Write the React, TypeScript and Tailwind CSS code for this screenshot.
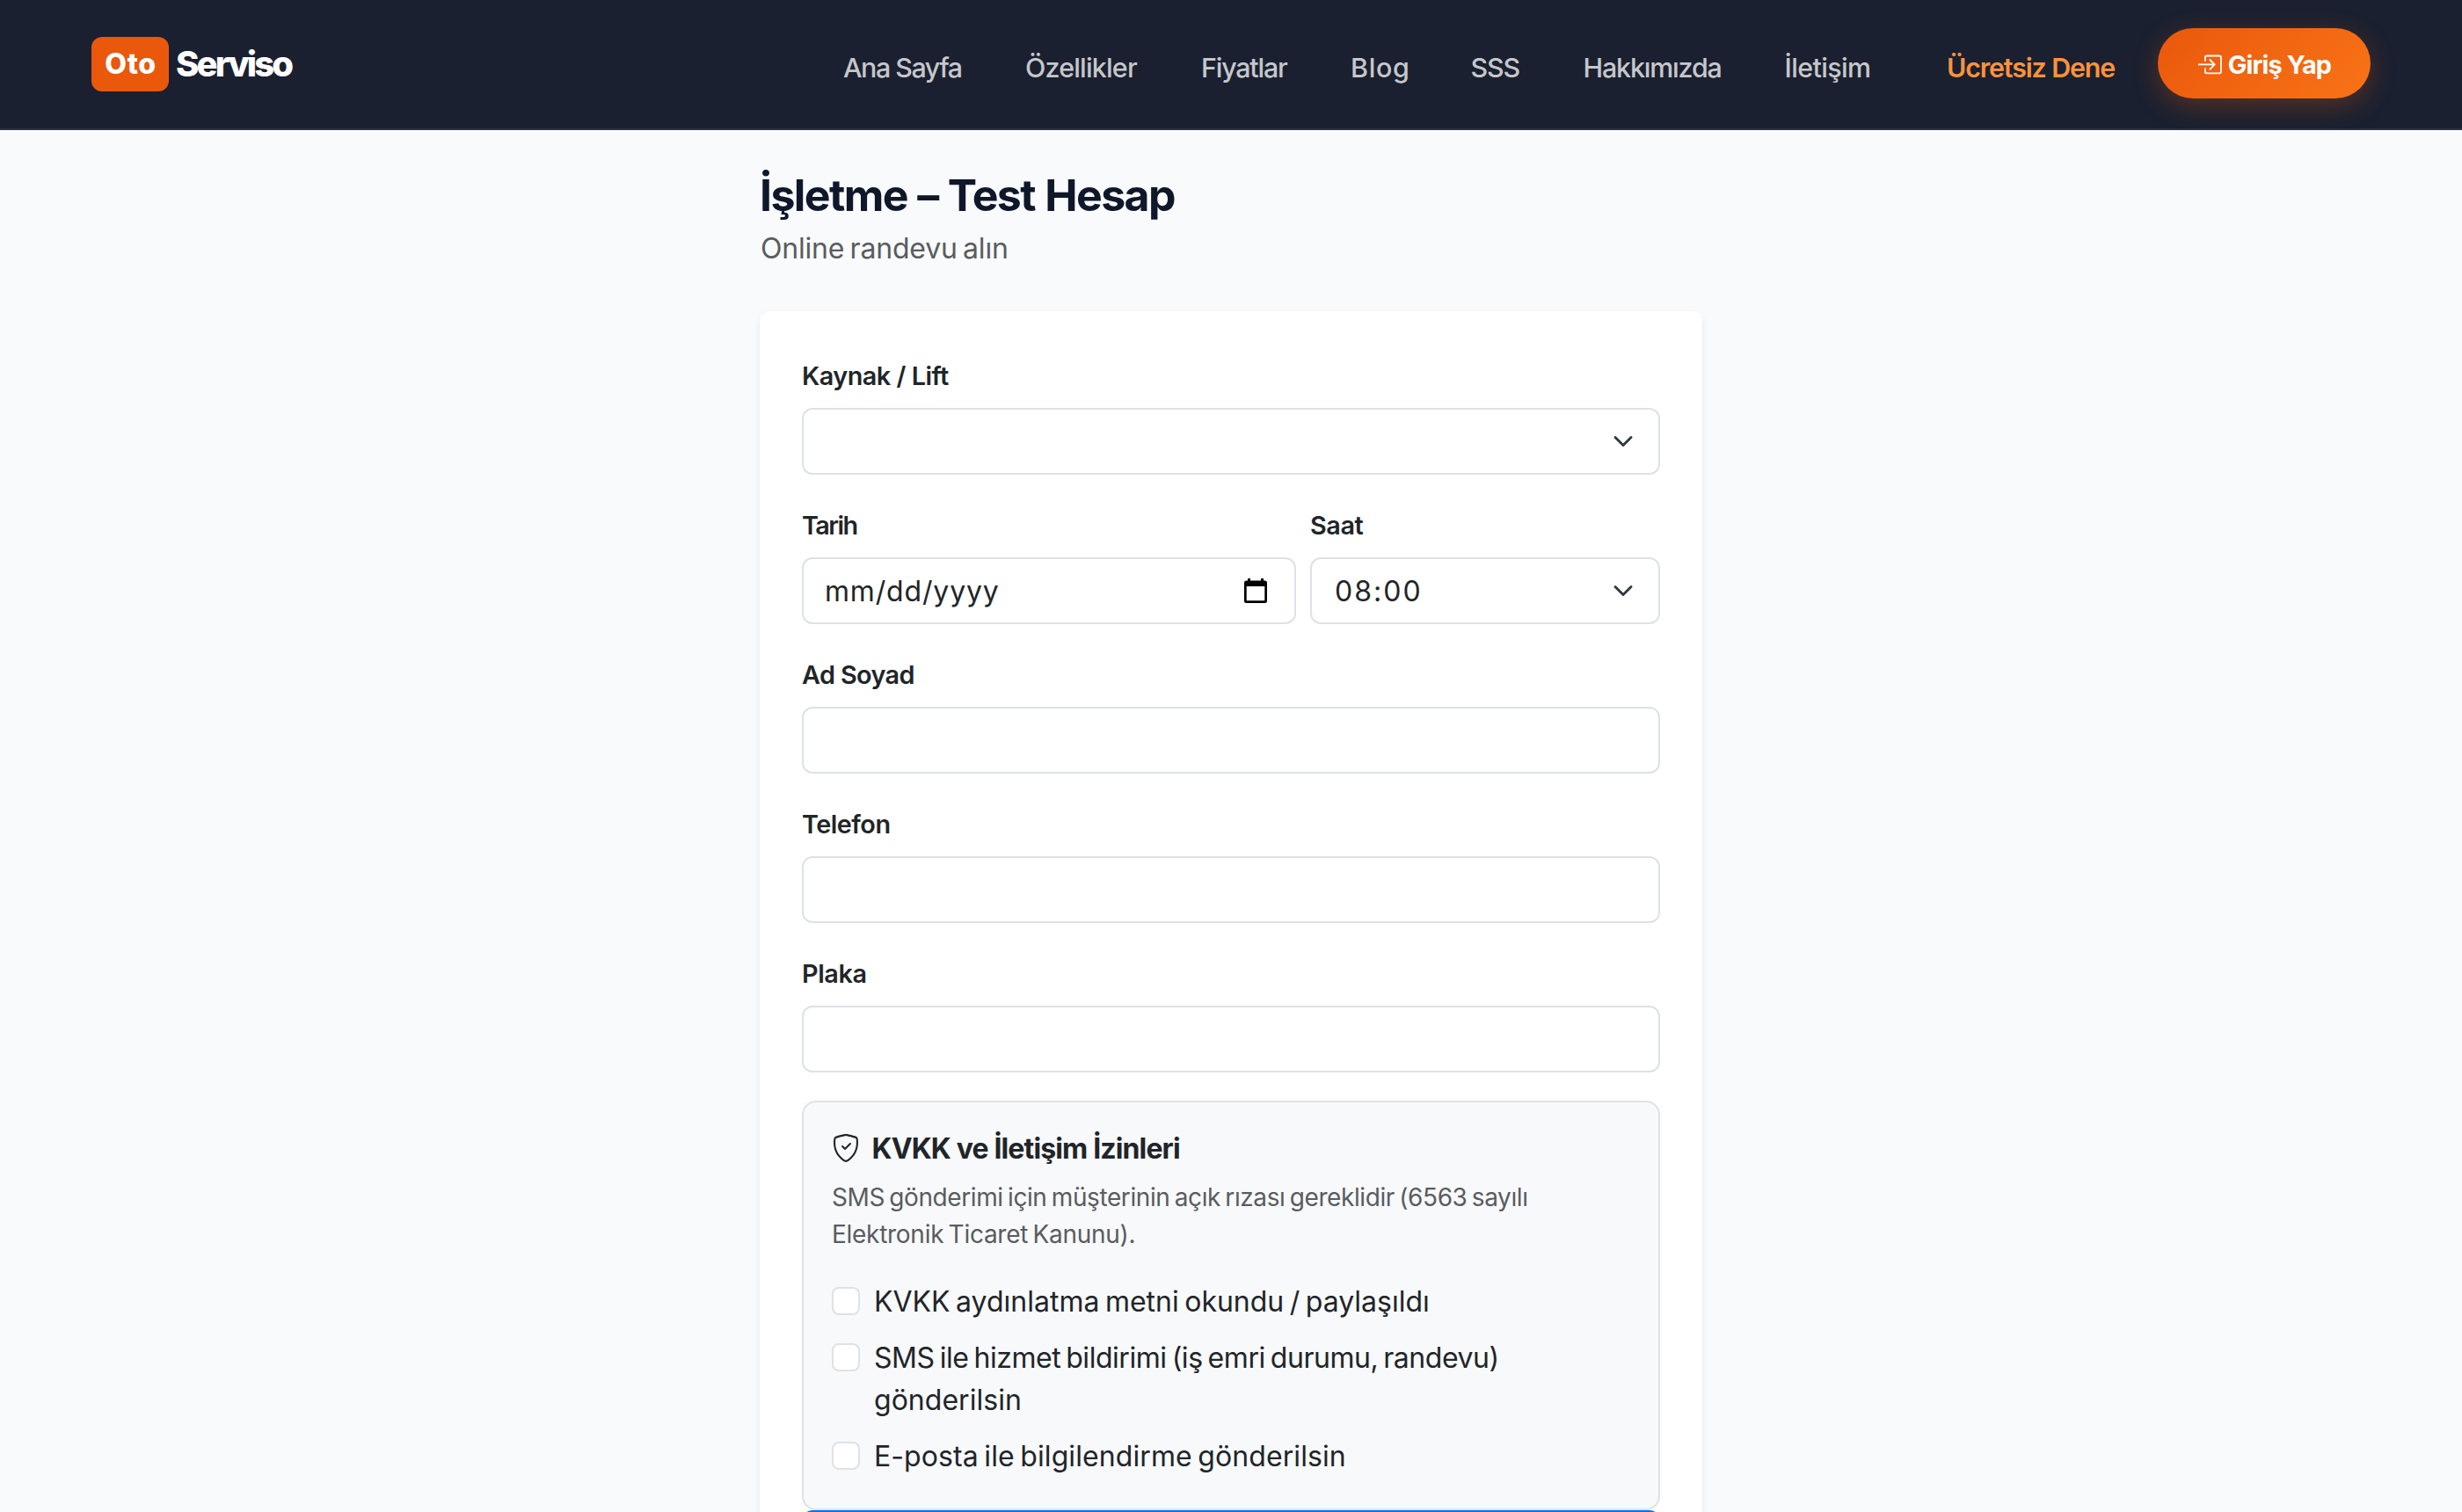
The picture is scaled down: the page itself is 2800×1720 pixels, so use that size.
import React from "react";
import { BsBoxArrowInRight, BsShieldCheck } from "react-icons/bs";

const navItems = [
  { label: "Ana Sayfa", cls: "w-[207px] tracking-[-1.46px]" },
  { label: "Özellikler", cls: "w-[200px] tracking-[-0.8px]" },
  { label: "Fiyatlar", cls: "w-[170px] tracking-[-1.2px]" },
  { label: "Blog", cls: "w-[136.5px] tracking-[0.68px]" },
  { label: "SSS", cls: "w-[128px] tracking-[-1.08px]" },
  { label: "Hakkımızda", cls: "w-[229px] tracking-[-1.16px]" },
  { label: "İletişim", cls: "w-[184.5px] tracking-[-0.62px]" },
];

function Header() {
  return (
    <header className="flex h-[148px] items-start border-b-2 border-[#2a3040] bg-[#1a2030] px-[104px]">
      <a className="mt-[42px] flex items-center text-white">
        <span className="flex h-[62px] w-[88px] items-center justify-center rounded-[12px] bg-[#ea580c] pl-[1px] text-[32px] font-extrabold tracking-[0.7px]">
          Oto
        </span>
        <span className="ml-[8px] text-[40px] font-extrabold leading-[62px] tracking-[-2.9px]">Serviso</span>
      </a>
      <nav className="ml-auto mt-[54px] flex text-[30.4px] font-medium leading-[46px] text-[#c6c7cb]">
        {navItems.map((n) => (
          <a key={n.label} className={`shrink-0 whitespace-nowrap ${n.cls}`}>
            {n.label}
          </a>
        ))}
        <a className="w-[240px] shrink-0 whitespace-nowrap font-semibold tracking-[-1.14px] text-[#fb923c]">
          Ücretsiz Dene
        </a>
      </nav>
      <a className="mt-[32px] flex h-[80px] w-[242px] items-center rounded-full bg-[linear-gradient(135deg,#ea580c,#f97316)] pl-[44px] pt-[3px] text-[28.8px] font-bold tracking-[-0.87px] text-white shadow-[0_8px_30px_rgba(234,88,12,0.3)]">
        <BsBoxArrowInRight className="mr-[7px] size-[28.8px]" />
        <span className="whitespace-nowrap">Giriş Yap</span>
      </a>
    </header>
  );
}

function Chevron() {
  return (
    <svg viewBox="0 0 16 16" className="size-[24px]" fill="none">
      <path d="m2 5 6 6 6-6" stroke="#343a40" strokeWidth="2" strokeLinecap="round" strokeLinejoin="round" />
    </svg>
  );
}

function CalendarIcon() {
  return (
    <svg viewBox="0 0 26 28" className="h-[28px] w-[26px]" fill="#000">
      <path
        d="M4 0h3v2.500h12V0h3v2.500h1.500a2.500 2.500 0 0 1 2.500 2.500v20.500a2.500 2.500 0 0 1-2.500 2.500h-21A2.500 2.500 0 0 1 0 25.500V5a2.500 2.500 0 0 1 2.500-2.500H4zM2.700 9v16.300h20.600V9z"
        fillRule="evenodd"
      />
    </svg>
  );
}

function Field({
  label,
  tracking = "",
  className = "",
  children,
}: {
  label: string;
  tracking?: string;
  className?: string;
  children?: React.ReactNode;
}) {
  return (
    <div className={className}>
      <div className={`h-[44px] text-[28.8px] font-semibold leading-[44px] ${tracking}`}>{label}</div>
      <div className="mt-[14px] flex h-[76px] items-center rounded-[12px] border-2 border-[#dee2e6] bg-white text-[32px]">
        {children}
      </div>
    </div>
  );
}

function Check({ children, tracking }: { children: React.ReactNode; tracking: string }) {
  return (
    <div className="mb-[16px] flex h-auto">
      <span className="mt-[8px] size-[32px] shrink-0 rounded-[8px] border-2 border-[#dee2e6] bg-white" />
      <span
        className={`-mb-px ml-[16px] whitespace-nowrap pt-px text-[32px] leading-[48px] [word-spacing:-2.5px] ${tracking}`}
      >
        {children}
      </span>
    </div>
  );
}

export default function App() {
  return (
    <div className="h-[1720px] w-[2800px] overflow-hidden bg-[#f8fafc] font-[Inter,sans-serif] text-[#212529]">
      <Header />
      <main className="mx-auto w-[1072px] pt-[44px]">
        <h1 className="whitespace-nowrap text-[50px] font-bold leading-[60px] tracking-[-1.6px] text-[#0f172a] [word-spacing:1px]">
          İşletme – Test Hesap
        </h1>
        <p className="ml-px mt-[7px] text-[32px] leading-[48px] tracking-[-0.19px] text-[#595c5f] [word-spacing:-2.5px]">
          Online randevu alın
        </p>
        <section className="mt-[47px] rounded-[12px] bg-white px-[48px] pb-[48px] pt-[52px] shadow-[0_4px_8px_rgba(0,0,0,0.075)]">
          <div className="flex flex-col gap-[36px]">
            <Field label="Kaynak / Lift" tracking="tracking-[-0.51px]">
              <span className="ml-auto mr-[28px]">
                <Chevron />
              </span>
            </Field>
            <div className="flex gap-[16px]">
              <Field label="Tarih" tracking="tracking-[-1.55px]" className="w-[562px]">
                <span className="ml-[24px] pt-[2px] tracking-[0.84px]">mm/dd/yyyy</span>
                <span className="ml-auto mr-[31px]">
                  <CalendarIcon />
                </span>
              </Field>
              <Field label="Saat" tracking="tracking-[-0.4px]" className="flex-1">
                <span className="ml-[26px] pt-[2px] tracking-[2.03px]">08:00</span>
                <span className="ml-auto mr-[28px]">
                  <Chevron />
                </span>
              </Field>
            </div>
            <Field label="Ad Soyad" tracking="tracking-[-0.6px]" />
            <Field label="Telefon" tracking="tracking-[-0.5px]" />
            <Field label="Plaka" tracking="tracking-[-0.4px]" />
          </div>
          <div className="mt-[32px] h-[466px] rounded-[16px] border-2 border-[#dee2e6] bg-[#f8f9fb] px-[32px] pt-[32px]">
            <div className="flex h-[40px] items-center">
              <BsShieldCheck className="size-[32px]" />
              <span className="ml-[13.5px] whitespace-nowrap pt-[2px] text-[32px] font-bold leading-[40px] tracking-[-0.86px]">
                KVKK ve İletişim İzinleri
              </span>
            </div>
            <p className="mt-[15px] whitespace-nowrap text-[28px] leading-[42px] text-[#595c5f] [word-spacing:-2.2px]">
              <span className="block tracking-[-0.4px]">
                SMS gönderimi için müşterinin açık rızası gereklidir (6563 sayılı
              </span>
              <span className="block tracking-[-0.28px]">Elektronik Ticaret Kanunu).</span>
            </p>
            <div className="mt-[31px]">
              <Check tracking="tracking-[0px]">KVKK aydınlatma metni okundu / paylaşıldı</Check>
              <Check tracking="tracking-[-0.46px]">
                SMS ile hizmet bildirimi (iş emri durumu, randevu)
                <br />
                <span className="tracking-[0.03px]">gönderilsin</span>
              </Check>
              <Check tracking="tracking-[0.08px]">E-posta ile bilgilendirme gönderilsin</Check>
            </div>
          </div>
          <button className="block h-[80px] w-full rounded-[12px] bg-[#0d6efd]" />
        </section>
      </main>
    </div>
  );
}
